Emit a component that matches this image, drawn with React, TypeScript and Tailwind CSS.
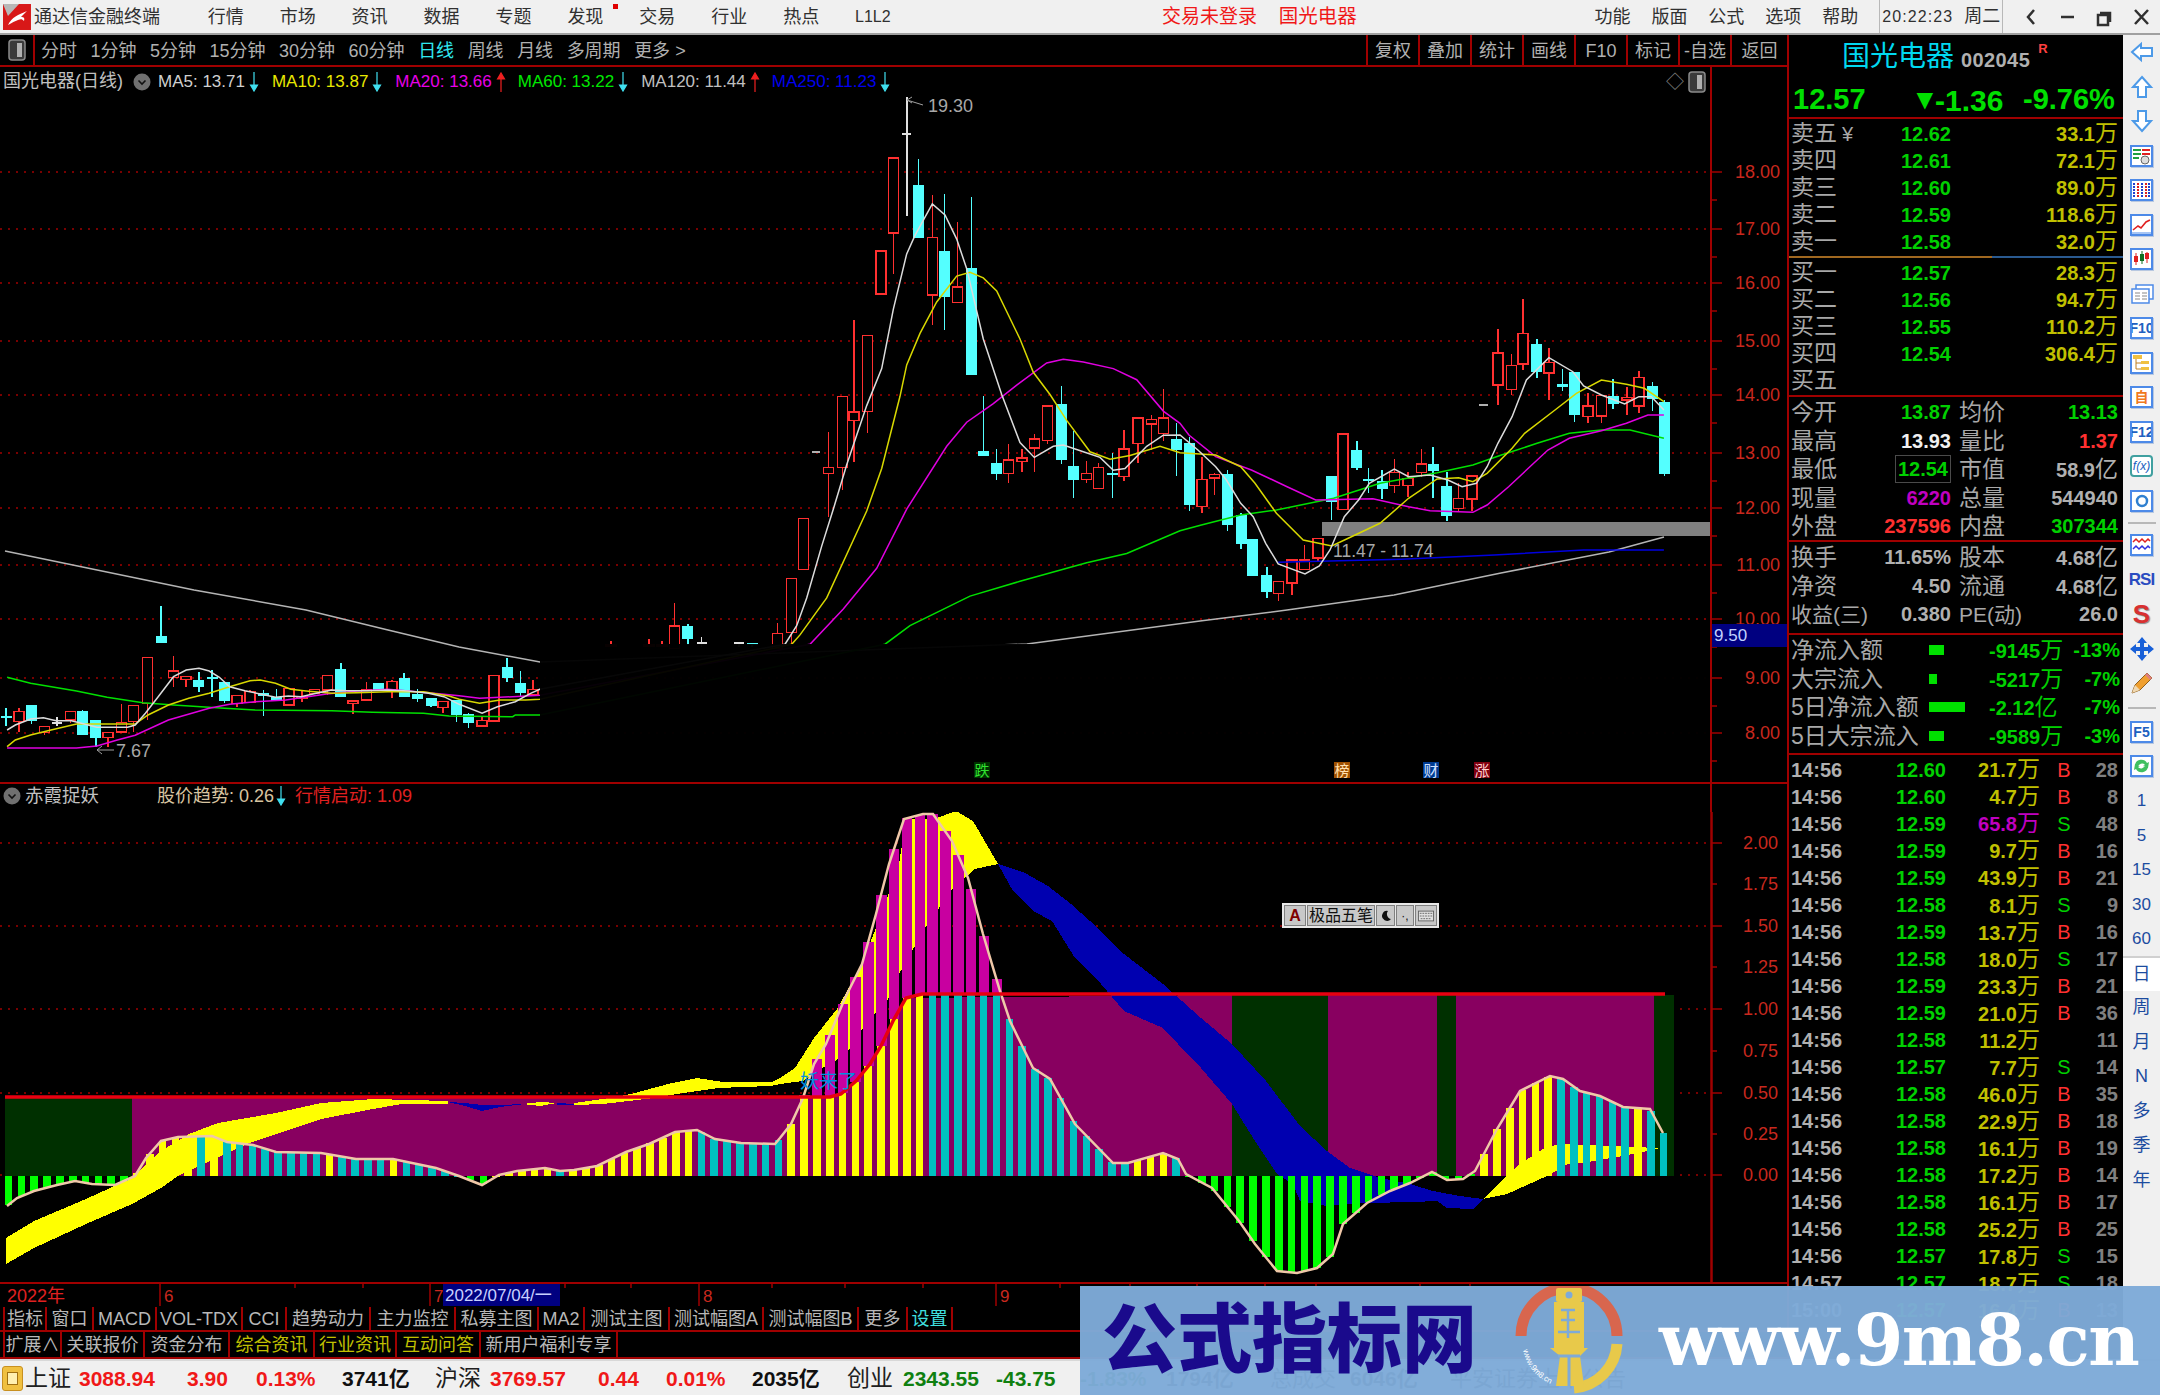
import React from "react";

type Pt = number[];
type Candle = [number, number, number, number, number, "r" | "c" | "w"];

// the numbers below were read off crops of the chart, so each group has its own origin and scale
const toReal = (pts: Pt[], ox: number, oy: number, sx: number, sy: number): Pt[] =>
  pts.map(([x, y]) => [ox + x / sx, oy + y / sy]);
const candleReal = (cs: Candle[], ox: number, oy: number, sx: number, sy: number): Candle[] =>
  cs.map(([x, h, t, b, l, k]) => [ox + x / sx, oy + h / sy, oy + t / sy, oy + b / sy, oy + l / sy, k]);
const left = (p: Pt[]) => toReal(p, 0, 590, 1.96, 3);
const mid = (p: Pt[]) => toReal(p, 700, 80, 3, 2.703);
const right = (p: Pt[]) => toReal(p, 1180, 280, 2.8, 3);
const str = (p: Pt[]) => p.map(([x, y]) => `${x.toFixed(1)},${y.toFixed(1)}`).join(" ");
const ribbon = (u: Pt[], l: Pt[]) => str([...u, ...[...l].reverse()]);

const candles: Candle[] = [
  ...candleReal(
    [
      [12, 355, 378, 381, 408, "c"], [37, 355, 365, 395, 425, "r"], [62, 345, 345, 392, 403, "c"],
      [87, 410, 410, 428, 435, "r"], [112, 380, 398, 400, 408, "w"], [138, 365, 365, 390, 400, "r"],
      [162, 360, 364, 436, 436, "c"], [188, 390, 390, 444, 470, "c"], [212, 428, 428, 443, 470, "r"],
      [238, 342, 397, 426, 426, "r"], [262, 347, 347, 395, 425, "r"], [289, 203, 203, 340, 390, "r"],
      [316, 48, 139, 160, 160, "c"], [340, 197, 243, 263, 290, "r"], [365, 260, 260, 268, 290, "r"],
      [390, 245, 269, 291, 305, "c"], [416, 240, 262, 268, 320, "c"], [440, 275, 275, 332, 340, "c"],
      [465, 317, 317, 341, 350, "r"], [490, 300, 305, 338, 338, "r"], [516, 300, 310, 318, 377, "c"],
      [542, 296, 320, 333, 333, "c"], [566, 296, 296, 345, 345, "r"], [592, 300, 320, 325, 335, "r"],
      [616, 298, 298, 310, 310, "r"], [642, 257, 257, 300, 315, "r"], [668, 220, 238, 321, 321, "c"],
      [692, 333, 333, 340, 372, "r"], [718, 275, 300, 330, 330, "r"], [742, 278, 278, 302, 302, "c"],
      [768, 270, 275, 300, 325, "r"], [792, 250, 265, 322, 322, "c"], [818, 296, 313, 328, 335, "c"],
      [845, 323, 323, 347, 350, "c"], [868, 335, 335, 353, 370, "r"], [895, 330, 330, 375, 395, "c"],
      [918, 370, 373, 400, 413, "c"], [945, 378, 392, 408, 408, "r"], [968, 257, 257, 393, 393, "r"],
      [994, 205, 230, 265, 277, "c"], [1020, 243, 278, 310, 320, "c"], [1045, 270, 298, 315, 315, "r"],
      [1198, 152, 165, 170, 170, "r"], [1272, 148, 165, 170, 170, "r"], [1298, 152, 165, 170, 170, "r"],
      [1322, 40, 108, 175, 175, "r"], [1348, 103, 108, 148, 165, "c"], [1375, 140, 158, 161, 170, "w"],
      [1448, 156, 158, 160, 170, "w"], [1474, 158, 160, 162, 170, "c"], [1524, 98, 130, 175, 175, "r"],
    ],
    0, 590, 1.96, 3,
  ),
  ...candleReal(
    [
      [274, 1347, 1347, 1494, 1530, "r"], [310, 1185, 1185, 1323, 1323, "r"], [386, 952, 1047, 1064, 1182, "r"],
      [427, 856, 856, 1048, 1108, "r"], [462, 648, 897, 921, 1032, "r"], [503, 690, 690, 896, 955, "r"],
      [543, 462, 462, 578, 578, "r"], [580, 211, 211, 414, 525, "r"], [656, 214, 284, 428, 428, "c"],
      [697, 312, 426, 581, 662, "r"], [733, 307, 462, 586, 676, "c"], [773, 385, 560, 602, 602, "r"],
      [814, 315, 507, 797, 797, "c"], [850, 855, 1002, 1015, 1015, "c"], [890, 997, 1034, 1065, 1082, "c"],
      [926, 985, 1027, 1063, 1088, "r"], [966, 998, 1022, 1031, 1060, "r"], [1003, 958, 970, 995, 1060, "r"],
      [1043, 881, 881, 975, 985, "r"], [1084, 827, 876, 1028, 1037, "c"], [1120, 950, 1043, 1080, 1130, "c"],
      [1160, 1030, 1064, 1080, 1088, "r"], [1196, 1036, 1047, 1104, 1104, "r"], [1237, 1009, 1062, 1068, 1130, "c"],
      [1272, 945, 998, 1072, 1085, "r"], [1314, 913, 913, 982, 1036, "r"], [1354, 905, 917, 930, 1000, "r"],
      [1390, 835, 913, 955, 975, "r"], [1430, 928, 970, 1000, 1070, "c"],
    ],
    700, 80, 3, 2.703,
  ),
  ...candleReal(
    [
      [26, 470, 488, 676, 693, "c"], [62, 530, 598, 680, 698, "r"], [96, 580, 583, 594, 645, "r"],
      [133, 570, 583, 735, 752, "c"], [171, 700, 705, 793, 806, "c"], [204, 776, 776, 888, 888, "c"],
      [243, 862, 884, 937, 955, "c"], [276, 904, 904, 941, 963, "r"], [314, 840, 840, 909, 945, "r"],
      [348, 795, 840, 869, 869, "r"], [386, 776, 776, 834, 845, "r"], [424, 587, 587, 665, 720, "c"],
      [457, 462, 462, 689, 689, "r"], [495, 483, 511, 565, 570, "c"], [528, 565, 596, 601, 640, "c"],
      [566, 570, 602, 627, 658, "c"], [600, 538, 578, 617, 640, "r"], [638, 575, 595, 617, 650, "r"],
      [676, 507, 552, 578, 590, "r"], [709, 502, 551, 574, 655, "c"], [747, 575, 619, 708, 722, "c"],
      [780, 610, 656, 685, 697, "r"], [818, 588, 588, 657, 692, "r"], [890, 147, 219, 315, 375, "r"],
      [928, 222, 257, 328, 345, "r"], [961, 56, 161, 252, 270, "r"], [999, 178, 191, 276, 295, "c"],
      [1033, 205, 247, 279, 360, "r"], [1071, 268, 313, 320, 333, "c"], [1104, 277, 277, 405, 425, "c"],
      [1142, 340, 378, 409, 428, "r"], [1180, 346, 346, 408, 428, "r"], [1213, 297, 349, 373, 388, "c"],
      [1251, 322, 352, 360, 405, "r"], [1285, 272, 292, 378, 400, "r"], [1323, 305, 318, 357, 392, "c"],
      [1356, 360, 367, 582, 587, "c"],
    ],
    1180, 280, 2.8, 3,
  ),
];

const ma5 = [
  ...left([[14, 420], [30, 405], [60, 387], [85, 383], [110, 392], [140, 392], [165, 402], [190, 412], [250, 412], [265, 405], [285, 370], [310, 320], [340, 260], [365, 240], [390, 235], [410, 243], [430, 262], [450, 290], [480, 302], [510, 312], [540, 322], [565, 318], [590, 320], [620, 310], [650, 300], [680, 302], [720, 302], [760, 300], [800, 303], [840, 310], [870, 320], [900, 343], [945, 370], [975, 350], [1010, 335], [1040, 310], [1058, 298]]),
  ...mid([[255, 1525], [290, 1475], [320, 1400], [365, 1260], [400, 1160], [440, 1040], [500, 880], [545, 780], [580, 620], [620, 470], [645, 420], [697, 335], [735, 365], [770, 430], [800, 510], [850, 700], [905, 850], [960, 980], [1003, 1020], [1060, 990], [1090, 987], [1150, 1005], [1200, 1020], [1240, 1055], [1275, 1050], [1340, 990], [1390, 960]]),
  ...right([[0, 465], [50, 510], [100, 560], [130, 600], [170, 670], [205, 710], [240, 790], [275, 852], [350, 882], [390, 858], [420, 810], [460, 710], [500, 660], [530, 610], [600, 567], [640, 590], [700, 585], [750, 600], [790, 620], [830, 610], [860, 560], [890, 490], [930, 410], [970, 300], [1033, 233], [1100, 275], [1130, 318], [1180, 345], [1245, 372], [1285, 350], [1320, 350], [1355, 390]]),
];
const ma10 = [
  ...left([[14, 470], [30, 450], [60, 435], [100, 420], [150, 402], [190, 402], [265, 402], [290, 375], [330, 345], [370, 325], [410, 310], [450, 290], [490, 272], [510, 270], [540, 280], [570, 298], [600, 303], [650, 310], [700, 308], [760, 305], [830, 305], [880, 318], [900, 328], [940, 340], [980, 330], [1030, 330], [1058, 328]]),
  ...mid([[275, 1525], [300, 1500], [380, 1400], [500, 1165], [545, 1050], [600, 855], [620, 770], [660, 685], [710, 600], [770, 530], [810, 520], [850, 535], [890, 570], [960, 700], [1000, 790], [1050, 850], [1100, 920], [1170, 1005], [1230, 1025], [1290, 1015], [1380, 990]]),
  ...right([[0, 518], [100, 525], [170, 560], [210, 610], [270, 700], [345, 780], [425, 798], [480, 770], [560, 730], [640, 655], [720, 597], [780, 593], [820, 605], [860, 580], [930, 505], [965, 460], [1050, 390], [1110, 340], [1180, 300], [1250, 313], [1300, 325], [1355, 365]]),
];
const ma20 = [
  ...left([[14, 474], [150, 474], [190, 468], [230, 450], [265, 436], [330, 390], [410, 355], [450, 343], [500, 335], [560, 330], [640, 312], [700, 303], [760, 298], [840, 308], [900, 317], [940, 325], [1058, 316]]),
  ...mid([[330, 1525], [430, 1430], [530, 1320], [620, 1160], [740, 990], [800, 925], [880, 875], [950, 825], [1040, 765], [1090, 755], [1150, 762], [1240, 780], [1310, 810], [1390, 895]]),
  ...right([[0, 430], [25, 465], [100, 530], [200, 570], [300, 620], [380, 660], [540, 656], [640, 680], [700, 692], [820, 697], [860, 675], [920, 620], [1030, 510], [1090, 475], [1180, 452], [1250, 430], [1310, 405], [1355, 405]]),
];
const ma60 = [
  ...left([[14, 262], [60, 280], [150, 303], [210, 322], [280, 338], [340, 345], [440, 355], [500, 360], [650, 362], [730, 367], [830, 370], [880, 378], [1005, 380], [1010, 375], [1058, 375]]),
  ...mid([[555, 1525], [630, 1475], [810, 1395], [960, 1355], [1160, 1305], [1280, 1280]]),
  ...right([[0, 752], [60, 735], [170, 705], [270, 690], [430, 655], [560, 610], [720, 578], [820, 555], [900, 525], [1000, 490], [1090, 460], [1180, 450], [1260, 450], [1355, 475]]),
];
const ma120: Pt[] = [[5, 551], [194, 590], [306, 610], [388, 630], [459, 647], [540, 662], [1027, 644], [1200, 621], [1287, 610], [1394, 595], [1501, 573], [1609, 552], [1664, 537]];
const ma250 = right([[275, 847], [620, 838], [880, 825], [1130, 810], [1355, 810]]);

const gridTop: [number, string][] = [[172, "18.00"], [229, "17.00"], [283, "16.00"], [341, "15.00"], [395, "14.00"], [453, "13.00"], [508, "12.00"], [565, "11.00"], [619, "10.00"], [678, "9.00"], [733, "8.00"]];

const UpperChart = () => (
  <svg width={1787} height={687} viewBox="0 95 1787 687" className="block">
    {gridTop.map(([y, t]) => (
      <g key={t}>
        <line x1={0} x2={1710} y1={y} y2={y} stroke="#a00000" strokeWidth={1.5} strokeDasharray="2 6" />
        <line x1={1711} x2={1722} y1={y} y2={y} stroke="#a00000" strokeWidth={1.5} />
        <line x1={1711} x2={1717} y1={y + 28} y2={y + 28} stroke="#a00000" strokeWidth={1.5} />
        <text x={1780} y={y + 6} textAnchor="end" fontSize={18} fill="#c8281e">{t}</text>
      </g>
    ))}
    <line x1={1711} x2={1711} y1={95} y2={782} stroke="#a00000" strokeWidth={2} />
    <rect x={1322} y={522} width={388} height={14} fill="#808080" />
    <g shapeRendering="crispEdges">
      {candles.map(([x, h, t, b, l, k], i) => {
        const color = k === "r" ? "#ff3030" : k === "c" ? "#54ffff" : "#e0e0e0";
        return (
          <g key={i}>
            <line x1={x} x2={x} y1={h} y2={l} stroke={color} strokeWidth={1.5} />
            {k === "r" && <rect x={x - 5} y={t} width={10} height={b - t} fill="#000" stroke={color} strokeWidth={1.5} />}
            {k === "c" && <rect x={x - 5.5} y={t} width={11} height={Math.max(b - t, 2)} fill={color} />}
            {k === "w" && <line x1={x - 5} x2={x + 5} y1={t} y2={t} stroke={color} strokeWidth={2} />}
          </g>
        );
      })}
      <line x1={906.5} x2={906.5} y1={97} y2={216} stroke="#e0e0e0" strokeWidth={2} />
      <line x1={902} x2={911} y1={134} y2={134} stroke="#e0e0e0" strokeWidth={2} />
      <line x1={812} x2={820} y1={452} y2={452} stroke="#b0b0b0" strokeWidth={2} />
      <line x1={1479} x2={1488} y1={405} y2={405} stroke="#b0b0b0" strokeWidth={2} />
    </g>
    <polyline points={str(ma120)} fill="none" stroke="#b4b4b4" strokeWidth={1.5} />
    <polyline points={str(ma250)} fill="none" stroke="#0000e0" strokeWidth={1.5} />
    <polyline points={str(ma60)} fill="none" stroke="#00e000" strokeWidth={1.5} />
    <polyline points={str(ma20)} fill="none" stroke="#e000e0" strokeWidth={1.5} />
    <polyline points={str(ma10)} fill="none" stroke="#d8d800" strokeWidth={1.5} />
    <polyline points={str(ma5)} fill="none" stroke="#dcdcdc" strokeWidth={1.5} />

    {/* the picture is blacked out here: the candles of that stretch are nearly invisible */}
    <rect x={540} y={644} width={1170} height={136} fill="#000" opacity={0.97} />

    <polyline points="907,100 923,105" fill="none" stroke="#a0a0a0" strokeWidth={1} />
    <polyline points="912,97 907,100 912,103" fill="none" stroke="#a0a0a0" strokeWidth={1} />
    <text x={928} y={112} fontSize={18} fill="#a8a8a8">19.30</text>
    <polyline points="97,750 114,750" fill="none" stroke="#a0a0a0" strokeWidth={1} />
    <polyline points="102,746 97,750 102,754" fill="none" stroke="#a0a0a0" strokeWidth={1} />
    <text x={116} y={757} fontSize={18} fill="#a8a8a8">7.67</text>
    <text x={1333} y={557} fontSize={17.5} fill="#a8a8a8">11.47 - 11.74</text>

    <rect x={1712} y={624} width={75} height={23} fill="#000080" />
    <text x={1714} y={641} fontSize={17} fill="#c0d0ff">9.50</text>

    {[
      [982, "跌", "#003000", "#30e030"],
      [1342, "榜", "#a05000", "#ffe0b0"],
      [1431, "财", "#003a90", "#d0e0ff"],
      [1482, "涨", "#800010", "#ffd0d0"],
    ].map(([x, t, bg, fg]) => (
      <g key={t as string}>
        <rect x={(x as number) - 8} y={762} width={16} height={16} fill={bg as string} />
        <text x={x as number} y={776} textAnchor="middle" fontSize={15} fill={fg as string}>{t as string}</text>
      </g>
    ))}
  </svg>
);

const beige: Pt[] = [
  [7, 1205], [17, 1197], [34, 1190], [57, 1184], [75, 1180], [92, 1183], [115, 1184], [135, 1175], [146, 1157], [161, 1140], [178, 1136], [212, 1135], [227, 1141], [253, 1144], [276, 1151], [321, 1152], [356, 1158], [393, 1158], [436, 1167], [459, 1175], [482, 1184], [499, 1174], [517, 1170], [545, 1167], [560, 1170], [574, 1169], [597, 1165], [626, 1151], [649, 1143], [675, 1131], [697, 1129], [715, 1138], [741, 1142], [775, 1143], [780, 1137], [791, 1123], [803, 1097], [814, 1063], [826, 1043], [845, 997], [862, 963], [876, 913], [889, 863], [904, 818], [923, 813], [933, 813], [952, 840], [968, 877], [983, 933], [1000, 990], [1010, 1020], [1033, 1067], [1050, 1078], [1075, 1123], [1113, 1162], [1128, 1162], [1163, 1152], [1178, 1158], [1186, 1173], [1212, 1187], [1239, 1220], [1255, 1243], [1277, 1270], [1297, 1272], [1317, 1267], [1333, 1253], [1343, 1223], [1367, 1202], [1390, 1190], [1410, 1182], [1432, 1171], [1447, 1179], [1463, 1178], [1475, 1170], [1497, 1128], [1520, 1090], [1550, 1075], [1563, 1078], [1580, 1090], [1600, 1095], [1623, 1106], [1650, 1108], [1663, 1132],
];
const redLine: Pt[] = [[5, 1096], [830, 1096], [841, 1093], [856, 1080], [870, 1063], [881, 1045], [893, 1020], [906, 997], [922, 993], [1665, 993]];

const valueAt = (pts: Pt[], x: number) => {
  if (x <= pts[0][0]) return pts[0][1];
  for (let i = 1; i < pts.length; i++) {
    if (x <= pts[i][0]) {
      const [x0, y0] = pts[i - 1];
      const [x1, y1] = pts[i];
      return y0 + ((y1 - y0) * (x - x0)) / (x1 - x0);
    }
  }
  return pts[pts.length - 1][1];
};

const barRanges: [number, string][] = [
  [130, "#00ff00"], [190, "#ffff00"], [205, "#00c0c0"], [220, "#ffff00"], [320, "#00c0c0"], [335, "#ffff00"], [385, "#00c0c0"], [400, "#ffff00"], [462, "#00c0c0"], [492, "#00ff00"], [550, "#ffff00"], [565, "#00c0c0"], [695, "#ffff00"], [780, "#00c0c0"], [925, "#ffff00"], [1130, "#00c0c0"], [1170, "#ffff00"], [1185, "#00c0c0"], [1475, "#00ff00"], [1555, "#ffff00"], [1633, "#00c0c0"], [1645, "#ffff00"], [1700, "#00c0c0"],
];
const barColor = (x: number) => barRanges.find(([end]) => x < end)![1];
const barXs = Array.from({ length: 130 }, (_, i) => 8.6 + 12.83 * i);
const BASE = 1175;

const yUp1: Pt[] = [[6, 1237], [34, 1220], [86, 1198], [132, 1177], [161, 1150], [189, 1133], [218, 1122], [276, 1112], [321, 1102], [373, 1098], [448, 1100]];
const yLo1: Pt[] = [[6, 1263], [34, 1247], [86, 1223], [132, 1203], [161, 1187], [178, 1175], [247, 1143], [321, 1118], [373, 1108], [402, 1103], [448, 1103]];
const yUp2: Pt[] = [[574, 1102], [603, 1098], [631, 1093], [672, 1082], [697, 1077], [723, 1081], [772, 1081], [780, 1077], [795, 1067], [814, 1037], [837, 1008], [860, 967], [876, 927], [887, 897], [899, 863], [906, 818], [925, 818], [937, 817], [956, 810], [973, 820], [998, 863]];
const yLo2: Pt[] = [[574, 1104], [603, 1103], [654, 1097], [677, 1093], [718, 1087], [770, 1085], [780, 1083], [803, 1080], [822, 1067], [835, 1060], [848, 1050], [861, 1030], [874, 1013], [887, 1000], [899, 973], [912, 950], [925, 927], [939, 907], [950, 890], [967, 875], [975, 868], [998, 863]];
const bUp: Pt[] = [[998, 863], [1025, 872], [1048, 885], [1071, 903], [1090, 920], [1124, 953], [1163, 983], [1201, 1017], [1232, 1043], [1266, 1080], [1300, 1125], [1327, 1150], [1350, 1167], [1380, 1177], [1410, 1183], [1433, 1190], [1460, 1195], [1483, 1198]];
const bLo: Pt[] = [[998, 863], [1013, 890], [1033, 910], [1052, 920], [1075, 957], [1101, 983], [1124, 1010], [1163, 1027], [1178, 1043], [1201, 1067], [1232, 1103], [1255, 1140], [1277, 1173], [1293, 1183], [1300, 1200], [1327, 1205], [1367, 1202], [1413, 1201], [1437, 1200], [1447, 1207], [1473, 1208], [1483, 1198]];
const yUp3: Pt[] = [[1483, 1198], [1507, 1175], [1517, 1165], [1543, 1148], [1558, 1143], [1658, 1147]];
const yLo3: Pt[] = [[1483, 1198], [1507, 1193], [1547, 1175], [1568, 1163], [1583, 1162], [1617, 1156], [1658, 1148]];

const axisLower: [number, string, boolean][] = [
  [842, "2.00", true], [883, "1.75", false], [925, "1.50", true], [966, "1.25", false], [1008, "1.00", true], [1050, "0.75", false], [1092, "0.50", true], [1133, "0.25", false], [1174, "0.00", true],
];

const dateTicks = [160, 295, 363, 430, 565, 631, 699, 772, 845, 923, 996, 1060, 1130, 1197, 1265, 1316, 1420, 1470];

const LowerChart = () => (
  <svg width={1787} height={495} viewBox="0 811 1787 495" className="block">
    {axisLower.map(([y, t, major]) => (
      <g key={t}>
        {major && <line x1={0} x2={1710} y1={y} y2={y} stroke="#a00000" strokeWidth={1.5} strokeDasharray="2 6" />}
        <line x1={1711} x2={major ? 1722 : 1717} y1={y} y2={y} stroke="#a00000" strokeWidth={1.5} />
        <text x={1778} y={y + 6} textAnchor="end" fontSize={18} fill="#c8281e">{t}</text>
      </g>
    ))}
    <line x1={1711.5} x2={1711.5} y1={811} y2={1282} stroke="#a00000" strokeWidth={2.5} />

    <g shapeRendering="crispEdges">
      <polygon points={`132,1096 830,1096 ${str(redLine.slice(2, 8))} 1232,994 1232,${BASE} 132,${BASE}`} fill="#880060" />
      <rect x={5} y={1097} width={127} height={BASE - 1097} fill="#003000" />
      <rect x={1232} y={994} width={96} height={BASE - 994} fill="#003000" />
      <rect x={1328} y={994} width={109} height={BASE - 994} fill="#880060" />
      <rect x={1437} y={994} width={19} height={BASE - 994} fill="#003000" />
      <rect x={1456} y={994} width={198} height={BASE - 994} fill="#880060" />
      <rect x={1654} y={994} width={20} height={BASE - 994} fill="#003000" />

      <polygon points={ribbon(yUp1, yLo1)} fill="#ffff00" />
      <polygon points="448,1101 465,1102 482,1104 500,1104 525,1103 500,1106 482,1110 465,1105" fill="#0000b0" />
      <polygon points="522,1103 540,1101 557,1102 540,1105" fill="#ffff00" />
      <polygon points="557,1102 574,1103 574,1104 557,1104" fill="#0000b0" />
      <polygon points={ribbon(yUp2, yLo2)} fill="#ffff00" />
      <polygon points={ribbon(bUp, bLo)} fill="#0000b0" />
      <polygon points={ribbon(yUp3, yLo3)} fill="#ffff00" />

      {barXs.map((x) => {
        const y = valueAt(beige, x);
        const top = Math.max(y, valueAt(redLine, x));
        return (
          <g key={x}>
            {y < valueAt(redLine, x) - 1 && <rect x={x - 5} y={y} width={10.5} height={valueAt(redLine, x) - y} fill="#c800a0" />}
            <rect x={x - 3.8} y={Math.min(top, BASE)} width={7.6} height={Math.max(Math.abs(BASE - top), 1)} fill={barColor(x)} />
          </g>
        );
      })}
    </g>

    <polyline points={str(beige)} fill="none" stroke="#f0c8a8" strokeWidth={2.5} />
    <polyline points={str(redLine)} fill="none" stroke="#e80010" strokeWidth={3.5} />
    <text x={800} y={1087} fontSize={19} fill="#0090e0">妖来了</text>

    <line x1={0} x2={1787} y1={1282} y2={1282} stroke="#a00000" strokeWidth={2} />
    {dateTicks.map((x) => (
      <line key={x} x1={x} x2={x} y1={1282} y2={[160, 430, 699, 996].includes(x) ? 1305 : 1287} stroke="#a00000" strokeWidth={1.5} />
    ))}
    <text x={7} y={1301} fontSize={18} fill="#e02020">2022年</text>
    <text x={164} y={1301} fontSize={17} fill="#c8281e">6</text>
    <text x={434} y={1301} fontSize={17} fill="#c8281e">7</text>
    <rect x={443} y={1283} width={117} height={22} fill="#000080" />
    <text x={445} y={1300} fontSize={17} fill="#c8d0ff">2022/07/04/一</text>
    <text x={703} y={1301} fontSize={17} fill="#c8281e">8</text>
    <text x={1000} y={1301} fontSize={17} fill="#c8281e">9</text>
  </svg>
);

const Arrow = ({ up, color }: { up?: boolean; color: string }) => (
  <svg width={10} height={20} viewBox="0 0 10 20" className="shrink-0">
    {up ? <path d="M5 20V5M1.5 7L5 1l3.5 6z" stroke={color} fill={color} strokeWidth={1.2} /> : <path d="M5 0v15M1.5 13L5 19l3.5-6z" stroke={color} fill={color} strokeWidth={1.2} />}
  </svg>
);

const DownDot = ({ className }: { className: string }) => (
  <svg width={18} height={18} viewBox="0 0 18 18" className={className}>
    <circle cx={9} cy={9} r={8.5} fill="#707070" />
    <path d="M5.5 7.5L9 11l3.5-3.5" stroke="#111" strokeWidth={1.6} fill="none" />
  </svg>
);

const PaneBox = () => (
  <svg width={18} height={22} viewBox="0 0 18 22">
    <rect x={1} y={1} width={16} height={20} rx={3} fill="#3a3a3a" stroke="#8a8a8a" strokeWidth={1.5} />
    <rect x={9} y={4} width={5} height={14} fill="#b0b0b0" />
  </svg>
);

const menu = ["行情", "市场", "资讯", "数据", "专题", "发现", "交易", "行业", "热点", "L1L2"];
const menuRight = ["功能", "版面", "公式", "选项", "帮助"];

const TitleBar = () => (
  <div className="flex h-[35px] items-center border-b-2 border-[#a0a0a0] bg-[#f0f0f0] text-[18px] text-[#303030]">
    <svg width={28} height={26} viewBox="0 0 28 26" className="ml-[3px]">
      <rect width={28} height={26} fill="#d81818" />
      <path d="M0 0h16L5 12z" fill="#b8b8b8" />
      <path d="M5 21C9 13 15 11 24 7l-6 6c3 0 4 1 3 4-2-2-3-2-6-1-3 1-6 3-10 5z" fill="#fff" />
    </svg>
    <span className="ml-[3px] w-[174px] whitespace-nowrap pt-[1px]">通达信金融终端</span>
    {menu.map((m) => (
      <span key={m} className={`relative w-[72px] whitespace-nowrap pt-[1px] ${m === "L1L2" ? "text-[16px]" : ""}`}>
        {m}
        {m === "发现" && <span className="absolute left-[46px] top-[1px] h-[5px] w-[5px] bg-[#e00000]" />}
      </span>
    ))}
    <span className="ml-[235px] w-[117px] whitespace-nowrap pt-[1px] text-[19px] text-[#f01818]">交易未登录</span>
    <span className="w-[316px] whitespace-nowrap pt-[1px] text-[19.500px] text-[#f01818]">国光电器</span>
    {menuRight.map((m) => (
      <span key={m} className="w-[57px] whitespace-nowrap pt-[1px]">{m}</span>
    ))}
    <div className="flex h-full w-[124px] items-center border-x border-[#b8b8b8] pl-[2px]">
      <span className="w-[82px] text-[16px] tracking-[1.1px]">20:22:23</span>
      <span>周二</span>
    </div>
    <div className="ml-[9px] flex">
      <svg width={37} height={22} viewBox="0 0 37 22"><path d="M22 4l-6 7 6 7" stroke="#303030" strokeWidth={2.5} fill="none" /></svg>
      <svg width={37} height={22} viewBox="0 0 37 22"><path d="M12 11h13" stroke="#303030" strokeWidth={2.5} /></svg>
      <svg width={37} height={22} viewBox="0 0 37 22"><path d="M14 7h10v9M12 9h10v10H12z" stroke="#303030" strokeWidth={2.5} fill="none" /></svg>
      <svg width={37} height={22} viewBox="0 0 37 22"><path d="M12 4l13 14M25 4L12 18" stroke="#303030" strokeWidth={2.5} /></svg>
    </div>
  </div>
);

const periods = ["分时", "1分钟", "5分钟", "15分钟", "30分钟", "60分钟", "日线", "周线", "月线", "多周期", "更多 >"];
const rightTools = ["复权", "叠加", "统计", "画线", "F10", "标记", "-自选", "返回"];

const Toolbar = () => (
  <div className="flex h-[32px] border-b-2 border-[#a00000] text-[18px] text-[#b0b0b0]">
    <div className="flex w-[35px] items-center justify-center border-r-2 border-[#a00000]"><PaneBox /></div>
    <div className="ml-[6px] flex items-center gap-[13.500px] pt-[2px]">
      {periods.map((p) => (
        <span key={p} className={`whitespace-nowrap ${p === "日线" ? "text-[#30e8f0]" : ""}`}>{p}</span>
      ))}
    </div>
    <div className="ml-auto flex w-[421px]">
      {rightTools.map((t) => (
        <span key={t} className="flex w-[52px] items-center justify-center border-l-2 border-[#a00000] pt-[2px] whitespace-nowrap last:flex-1">{t}</span>
      ))}
    </div>
  </div>
);

const MaLegend = () => (
  <div className="flex h-[28px] w-[1712px] items-center border-r-2 border-[#a00000] pl-[3px] pt-[1px] text-[17px] whitespace-nowrap">
    <span className="w-[130px] text-[18px] text-[#c0c0c0]">国光电器(日线)</span>
    <DownDot className="mr-[7px] ml-[0px]" />
    <span className="mr-[4px] text-[#d0d0d0]">MA5: 13.71</span><Arrow color="#40e0f0" />
    <span className="mr-[4px] ml-[13px] text-[#e8e800]">MA10: 13.87</span><Arrow color="#40e0f0" />
    <span className="mr-[4px] ml-[13px] text-[#e800e8]">MA20: 13.66</span><Arrow up color="#f02020" />
    <span className="mr-[4px] ml-[12px] text-[#00e800]">MA60: 13.22</span><Arrow color="#40e0f0" />
    <span className="mr-[4px] ml-[13px] text-[#c0c0c0]">MA120: 11.44</span><Arrow up color="#f02020" />
    <span className="mr-[4px] ml-[12px] text-[#0000f0]">MA250: 11.23</span><Arrow color="#40e0f0" />
    <span className="ml-auto mr-[4px] text-[18px] leading-none text-[#808080]">◇</span>
    <span className="mr-[4px] flex"><PaneBox /></span>
  </div>
);

const IndicatorLegend = () => (
  <div className="flex h-[28px] w-[1712px] items-center border-r-2 border-[#a00000] pb-[4px] pl-[3px] text-[18px] whitespace-nowrap">
    <DownDot className="mr-[4px]" />
    <span className="w-[132px] text-[18.500px] text-[#c0c0c0]">赤霞捉妖</span>
    <span className="mr-[2px] text-[#d8c4a0]">股价趋势: 0.26</span><Arrow color="#40e0f0" />
    <span className="ml-[9px] text-[#e02020]">行情启动: 1.09</span>
  </div>
);

const tabsA: [string, number][] = [["指标", 42], ["窗口", 47], ["MACD", 63], ["VOL-TDX", 86], ["CCI", 44], ["趋势动力", 84], ["主力监控", 85], ["私募主图", 83], ["MA2", 46], ["测试主图", 85], ["测试幅图A", 94], ["测试幅图B", 95], ["更多", 49], ["设置", 47]];
const tabsB: [string, number][] = [["扩展∧", 57], ["关联报价", 83], ["资金分布", 85], ["综合资讯", 85], ["行业资讯", 82], ["互动问答", 84], ["新用户福利专享", 139]];

const TabRow = ({ tabs, h }: { tabs: [string, number][]; h: string }) => (
  <div className={`flex ${h} border-b-2 border-[#a00000] pl-[3px] text-[18px] text-[#b8b8b8]`}>
    {tabs.map(([t, w]) => (
      <span
        key={t}
        style={{ width: w }}
        className={`flex items-center justify-center border-l-2 border-[#a00000] pt-[1px] whitespace-nowrap last:border-r-2 ${t === "设置" ? "text-[#40e0e0]" : ""} ${["综合资讯", "行业资讯", "互动问答"].includes(t) ? "text-[#c0c000]" : ""}`}
      >
        {t}
      </span>
    ))}
  </div>
);

const Cjk = ({ v, u }: { v: string; u: string }) => (
  <>
    {v}
    <span className="text-[23px] font-normal">{u}</span>
  </>
);

const asks = [["卖五", "12.62", "33.1"], ["卖四", "12.61", "72.1"], ["卖三", "12.60", "89.0"], ["卖二", "12.59", "118.6"], ["卖一", "12.58", "32.0"]];
const bids = [["买一", "12.57", "28.3"], ["买二", "12.56", "94.7"], ["买三", "12.55", "110.2"], ["买四", "12.54", "306.4"], ["买五", "", ""]];

const QuoteRow = ({ row }: { row: string[] }) => (
  <div className="flex h-[27px] items-center pl-[2px]">
    <span className="w-[60px] text-[23px] text-[#a8a8a8] whitespace-nowrap">
      {row[0]}
      {row[0] === "卖五" && <span className="ml-[5px] text-[20px]">¥</span>}
    </span>
    <span className="w-[100px] text-right text-[20px] font-bold text-[#00d000]">{row[1]}</span>
    <span className="w-[167px] text-right text-[20px] font-bold text-[#c0c000]">{row[2] && <Cjk v={row[2]} u="万" />}</span>
  </div>
);

const GREEN = "text-[#00d000]";
const GRAY = "text-[#b0b0b0]";
const stats1: [string, string, string, string, string, string][] = [
  ["今开", "13.87", GREEN, "均价", "13.13", GREEN],
  ["最高", "13.93", "text-[#f0f0f0]", "量比", "1.37", "text-[#ff3030]"],
  ["最低", "12.54", GREEN, "市值", "58.9亿", GRAY],
  ["现量", "6220", "text-[#c000c0]", "总量", "544940", GRAY],
  ["外盘", "237596", "text-[#ff3030]", "内盘", "307344", GREEN],
];
const stats2: [string, string, string, string, string, string][] = [
  ["换手", "11.65%", GRAY, "股本", "4.68亿", GRAY],
  ["净资", "4.50", GRAY, "流通", "4.68亿", GRAY],
  ["收益(三)", "0.380", GRAY, "PE(动)", "26.0", GRAY],
];

const StatRow = ({ s }: { s: [string, string, string, string, string, string] }) => {
  const last = s[4].endsWith("亿");
  return (
    <div className="flex h-[28.5px] items-center pl-[2px] text-[20px] font-bold">
      <span className="w-[60px] text-[23px] font-normal text-[#a8a8a8] whitespace-nowrap">{s[0] === "收益(三)" ? <span className="text-[21px]">{s[0]}</span> : s[0]}</span>
      <span className={`w-[100px] text-right ${s[2]}`}>
        {s[0] === "最低" ? <span className="border border-[#4a4a4a] px-[2px] py-[2px]">{s[1]}</span> : s[1]}
      </span>
      <span className="ml-[8px] w-[60px] text-[23px] font-normal text-[#a8a8a8] whitespace-nowrap">{s[3] === "PE(动)" ? <span className="text-[21px]">{s[3]}</span> : s[3]}</span>
      <span className={`w-[99px] text-right ${s[5]}`}>{last ? <Cjk v={s[4].slice(0, -1)} u="亿" /> : s[4]}</span>
    </div>
  );
};

const flows: [string, string, string, string, string][] = [
  ["净流入额", "w-[15px]", "-9145", "万", "-13%"],
  ["大宗流入", "w-[8px]", "-5217", "万", "-7%"],
  ["5日净流入额", "w-[36px]", "-2.12", "亿", "-7%"],
  ["5日大宗流入", "w-[15px]", "-9589", "万", "-3%"],
];

const ticks: [string, string, string, string, string][] = [
  ["14:56", "12.60", "21.7", "B", "28"], ["14:56", "12.60", "4.7", "B", "8"], ["14:56", "12.59", "65.8", "S", "48"],
  ["14:56", "12.59", "9.7", "B", "16"], ["14:56", "12.59", "43.9", "B", "21"], ["14:56", "12.58", "8.1", "S", "9"],
  ["14:56", "12.59", "13.7", "B", "16"], ["14:56", "12.58", "18.0", "S", "17"], ["14:56", "12.59", "23.3", "B", "21"],
  ["14:56", "12.59", "21.0", "B", "36"], ["14:56", "12.58", "11.2", "", "11"], ["14:56", "12.57", "7.7", "S", "14"],
  ["14:56", "12.58", "46.0", "B", "35"], ["14:56", "12.58", "22.9", "B", "18"], ["14:56", "12.58", "16.1", "B", "19"],
  ["14:56", "12.58", "17.2", "B", "14"], ["14:56", "12.58", "16.1", "B", "17"], ["14:56", "12.58", "25.2", "B", "25"],
  ["14:56", "12.57", "17.8", "S", "15"], ["14:57", "12.57", "18.7", "S", "18"], ["15:00", "12.57", "16.4", "B", "13"],
];

const QuotePanel = () => (
  <div className="flex w-[336px] shrink-0 flex-col overflow-hidden border-l-2 border-[#a00000]">
    <div className="h-[84px] shrink-0 border-b-2 border-[#a00000]">
      <div className="flex h-[42px] items-start whitespace-nowrap pt-[6px]">
        <span className="ml-[53px] text-[28px] leading-[32px] text-[#00d8f0]">国光电器</span>
        <span className="ml-[7px] mt-[7px] text-[20px] font-bold leading-[24px] tracking-[0.4px] text-[#b0b0b0]">002045</span>
        <span className="ml-[8px] -mt-[1px] text-[13px] font-bold leading-[18px] text-[#ff4040]">R</span>
      </div>
      <div className="flex h-[40px] items-center whitespace-nowrap pt-[6px] font-bold text-[#00e000]">
        <span className="ml-[4px] w-[118px] text-[29px]">12.57</span>
        <span className="w-[24px] text-[28px] font-normal leading-none">▼</span>
        <span className="w-[88px] text-[30px]">-1.36</span>
        <span className="text-[29px]">-9.76%</span>
      </div>
    </div>
    <div className="h-[137px] shrink-0 pt-[1px]">{asks.map((r) => <QuoteRow key={r[0]} row={r} />)}</div>
    <div className="flex h-[2px] shrink-0"><span className="w-[203px] bg-[#a06820]" /><span className="flex-1 bg-[#2a5a90]" /></div>
    <div className="h-[139px] shrink-0 border-b-2 border-[#a00000] pt-[1px]">{bids.map((r) => <QuoteRow key={r[0]} row={r} />)}</div>
    <div className="h-[145px] shrink-0 border-b-2 border-[#a00000] pt-[1px]">{stats1.map((s) => <StatRow key={s[0]} s={s} />)}</div>
    <div className="h-[93px] shrink-0 border-b-2 border-[#a00000] pt-[1px]">{stats2.map((s) => <StatRow key={s[0]} s={s} />)}</div>
    <div className="h-[120px] shrink-0 border-b-2 border-[#a00000] pt-[1px]">
      {flows.map(([t, w, v, u, p]) => (
        <div key={t} className="flex h-[28.5px] items-center pl-[2px] text-[20px] font-bold text-[#00d000]">
          <span className="w-[138px] text-[23px] font-normal text-[#a8a8a8] whitespace-nowrap">{t}</span>
          <span className="w-[60px]"><span className={`block h-[10px] bg-[#00e000] ${w}`} /></span>
          <span className="w-[68px] text-right whitespace-nowrap"><Cjk v={v} u={u} /></span>
          <span className="w-[63px] text-right">{p}</span>
        </div>
      ))}
    </div>
    <div className="pt-[1px]">
      {ticks.map((t, i) => (
        <div key={i} className="flex h-[27.06px] items-center pl-[2px] text-[20px] font-bold">
          <span className="w-[52px] text-[#b0b0b0]">{t[0]}</span>
          <span className="w-[103px] text-right text-[#00d000]">{t[1]}</span>
          <span className={`w-[94px] text-right whitespace-nowrap ${t[2] === "65.8" ? "text-[#c000c0]" : "text-[#c0c000]"}`}><Cjk v={t[2]} u="万" /></span>
          <span className={`w-[48px] text-center font-normal ${t[3] === "B" ? "text-[#ff3030]" : "text-[#00d000]"}`}>{t[3]}</span>
          <span className="w-[30px] text-right text-[#808080]">{t[4]}</span>
        </div>
      ))}
    </div>
  </div>
);

const Slot = ({ children, className = "" }: { children: React.ReactNode; className?: string }) => (
  <div className={`flex h-[34.5px] shrink-0 items-center justify-center ${className}`}>{children}</div>
);
const Framed = ({ children }: { children: React.ReactNode }) => (
  <div className="flex h-[22px] w-[23px] items-center justify-center overflow-hidden border-2 border-[#4d8ae8] bg-white text-[14px] font-bold leading-none text-[#2060c0] shadow-[1px_1px_0_#b8c8e0]">{children}</div>
);
const SideSep = ({ h }: { h: string }) => (
  <div className={`flex ${h} shrink-0 items-center`}><span className="h-[2px] w-[28px] bg-[#b8b8b8]" /></div>
);
const ArrowIcon = ({ d }: { d: string }) => (
  <svg width={24} height={24} viewBox="0 0 24 24"><path d={d} fill="#fff" stroke="#4d9ae8" strokeWidth={2} /></svg>
);

const SideBar = () => (
  <div className="flex w-[37px] shrink-0 flex-col items-center overflow-hidden bg-[#f0f0f0] text-[17px] text-[#1c4ca0]">
    <Slot><ArrowIcon d="M2 12l9-8v4h11v8H11v4z" /></Slot>
    <Slot><ArrowIcon d="M12 2l9 10h-5v10H8V12H3z" /></Slot>
    <Slot><ArrowIcon d="M12 22l9-10h-5V2H8v10H3z" /></Slot>
    <Slot><Framed><svg width={19} height={18} viewBox="0 0 19 18"><path d="M1 3h8M1 7h8M1 11h6" stroke="#20a040" strokeWidth={2} /><path d="M10 3h8M10 7h8" stroke="#e02020" strokeWidth={2} /><circle cx={13} cy={13} r={4} fill="#ddd" stroke="#666" /></svg></Framed></Slot>
    <Slot><Framed><svg width={19} height={18} viewBox="0 0 19 18"><path d="M2 2v14M6 2v14M10 2v14M14 2v14M17 2v14" stroke="#2040d0" strokeWidth={2} strokeDasharray="2 1" /><path d="M6 2v14M14 2v14" stroke="#e02020" strokeWidth={2} strokeDasharray="2 1" /></svg></Framed></Slot>
    <Slot><Framed><svg width={19} height={18} viewBox="0 0 19 18"><path d="M1 14l5-4 3 2 5-6 4-2" stroke="#e02020" strokeWidth={1.6} fill="none" /><path d="M0 17h19" stroke="#4d8ae8" /></svg></Framed></Slot>
    <Slot><Framed><svg width={19} height={18} viewBox="0 0 19 18"><path d="M4 3v12" stroke="#e02020" /><rect x={2} y={6} width={4} height={6} fill="#e02020" /><path d="M10 1v13" stroke="#107020" /><rect x={8} y={4} width={4} height={7} fill="#107020" /><path d="M15 2v11" stroke="#e02020" /><rect x={13} y={3} width={4} height={6} fill="#e02020" /></svg></Framed></Slot>
    <Slot><svg width={24} height={22} viewBox="0 0 24 22"><path d="M6 2h17v14H6z" fill="#fff" stroke="#4d8ae8" strokeWidth={1.5} /><path d="M2 6h17v14H2z" fill="#fff" stroke="#4d8ae8" strokeWidth={1.5} /><path d="M5 10h5M5 13h5M5 16h5M12 10h5M12 13h5M12 16h5" stroke="#888" /></svg></Slot>
    <Slot><Framed>F10</Framed></Slot>
    <Slot><Framed><svg width={19} height={18} viewBox="0 0 19 18"><path d="M4 4v11h5M4 9h5" stroke="#c08020" fill="none" /><rect x={1} y={1} width={9} height={4} fill="#f0c040" /><rect x={9} y={7} width={8} height={3} fill="#f0c040" /><rect x={9} y={13} width={8} height={3} fill="#f0c040" /></svg></Framed></Slot>
    <Slot><Framed><span className="text-[#f07820]">自</span></Framed></Slot>
    <Slot><Framed>F12</Framed></Slot>
    <Slot><div className="flex h-[22px] w-[23px] items-center justify-center rounded-[4px] border-2 border-[#40a0a0] bg-white text-[12px] italic text-[#2060c0]">f(x)</div></Slot>
    <Slot><Framed><svg width={18} height={18} viewBox="0 0 18 18"><circle cx={9} cy={9} r={5} stroke="#3080d0" strokeWidth={2.5} fill="none" /></svg></Framed></Slot>
    <SideSep h="h-[10px]" />
    <Slot><Framed><svg width={19} height={18} viewBox="0 0 19 18"><path d="M1 6l3-3 3 3 3-3 3 3 3-3 2 2" stroke="#e02020" strokeWidth={1.5} fill="none" /><path d="M1 13l3-3 3 3 3-3 3 3 3-3 2 2" stroke="#3030e0" strokeWidth={1.5} fill="none" /></svg></Framed></Slot>
    <Slot><span className="text-[17px] font-bold tracking-[-1px] text-[#2a4cc0]">RSI</span></Slot>
    <Slot><span className="text-[26px] font-bold leading-none text-[#d83030] [text-shadow:1px_1px_1px_#888]">S</span></Slot>
    <Slot><svg width={26} height={26} viewBox="0 0 26 26"><path d="M13 1l5 6h-3v4h4V8l6 5-6 5v-3h-4v4h3l-5 6-5-6h3v-4H7v3l-6-5 6-5v3h4V7H8z" fill="#1860d8" /></svg></Slot>
    <Slot><svg width={24} height={24} viewBox="0 0 24 24"><path d="M2 22l3-8L17 2l5 5L10 19z" fill="#f0a030" stroke="#906020" /><path d="M17 2l5 5-2 2-5-5z" fill="#e08080" /><path d="M2 22l3-8 5 5z" fill="#f0d8b0" /></svg></Slot>
    <SideSep h="h-[14px]" />
    <Slot><Framed>F5</Framed></Slot>
    <Slot><Framed><svg width={19} height={18} viewBox="0 0 19 18"><path d="M3 8a6.500 6.500 0 0 1 12-2l2-1-1 6-5-2 2-1a4 4 0 0 0-7 2zM16 10a6.500 6.500 0 0 1-12 2l-2 1 1-6 5 2-2 1a4 4 0 0 0 7-2z" fill="#40c060" /></svg></Framed></Slot>
    <Slot>1</Slot>
    <Slot>5</Slot>
    <Slot>15</Slot>
    <Slot>30</Slot>
    <Slot>60</Slot>
    <Slot className="w-full border-t-2 border-[#d0d0d0] bg-white text-[18px]">日</Slot>
    {["周", "月", "N", "多", "季", "年"].map((t) => (
      <Slot key={t} className="text-[18px]">{t}</Slot>
    ))}
  </div>
);

const statusCells: [string, number, string][] = [
  ["上证", 54, "text-[23px] font-normal text-[#202020]"],
  ["3088.94", 108, "text-[#f01818]"],
  ["3.90", 69, "text-[#f01818]"],
  ["0.13%", 86, "text-[#f01818]"],
  ["3741亿", 93, "text-[#101010]"],
  ["沪深", 55, "text-[23px] font-normal text-[#202020]"],
  ["3769.57", 108, "text-[#f01818]"],
  ["0.44", 68, "text-[#f01818]"],
  ["0.01%", 86, "text-[#f01818]"],
  ["2035亿", 95, "text-[#101010]"],
  ["创业", 56, "text-[23px] font-normal text-[#202020]"],
  ["2343.55", 93, "text-[#108010]"],
  ["-43.75", 84, "text-[#108010]"],
  ["-1.83%", 86, "text-[#108010]"],
  ["1794亿", 104, "text-[#101010]"],
  ["总成交", 80, "text-[22px] font-normal text-[#202020]"],
  ["6046亿", 100, "text-[#101010]"],
  ["平安证券上市公告", 200, "text-[22px] font-normal text-[#202020]"],
];

const StatusBar = () => (
  <div className="flex h-[36px] items-center border-t-2 border-[#d8d8d8] bg-[#f0f0f0] pt-[1px] whitespace-nowrap text-[21px] font-bold">
    <div className="ml-[2px] mr-[2px] flex h-[25px] w-[21px] items-center justify-center rounded-[3px] border border-[#c89020] bg-[#f0c040]">
      <span className="h-[13px] w-[11px] border border-[#a07010] bg-[#fff0b0]" />
    </div>
    {statusCells.map(([t, w, c]) => (
      <span key={t} style={{ width: w }} className={`shrink-0 ${c}`}>{t}</span>
    ))}
  </div>
);

const Watermark = () => (
  <div className="absolute bottom-0 left-[1080px] top-[1286px] flex w-[1080px] items-center bg-[#7eaad8]/97">
    <span className="ml-[22px] w-[412px] shrink-0 text-[75px] font-black leading-none text-[#1a0a8c] whitespace-nowrap">公式指标网</span>
    <svg width={110} height={109} viewBox="0 0 110 109" className="shrink-0">
      <defs>
        <path id="logoArc" d="M9 64A46 46 0 0 0 50 101" />
      </defs>
      <path d="M7 50A47 47 0 0 1 103 50" fill="none" stroke="#d8664e" strokeWidth={11} />
      <path d="M103 58A47 47 0 0 1 60 102" fill="none" stroke="#e8c94a" strokeWidth={11} />
      <rect x={42} y={2} width={26} height={14} rx={2} fill="#e8c94a" />
      <circle cx={55} cy={9} r={3.5} fill="#7eaad8" />
      <rect x={40} y={16} width={30} height={46} fill="#e8c94a" />
      <path d="M47 24h14M47 34h14M54 24v28M44 46h22" stroke="#7eaad8" strokeWidth={2.5} />
      <path d="M36 62h38l-8 8 4 30H42l4-30z" fill="#e8c94a" />
      <path d="M44 70h22M55 70v30" stroke="#7eaad8" strokeWidth={3} />
      <text fontSize={8} fill="#ffffff"><textPath href="#logoArc">www.9m8.cn</textPath></text>
    </svg>
    <span className="ml-[35px] shrink-0 text-[71px] font-bold leading-none tracking-[-1.500px] text-white whitespace-nowrap font-['DejaVu_Serif',serif]">www.9m8.cn</span>
  </div>
);

const ImeBar = () => (
  <div className="absolute left-[1282px] top-[903px] flex h-[25px] w-[157px] items-center gap-[1px] bg-[#e8e8e8] p-[2px] text-[16px] leading-none text-[#101010]">
    <span className="flex h-full w-[22px] shrink-0 items-center justify-center border border-[#808080] bg-[#c8c8c8] font-bold text-[#800000]">A</span>
    <span className="flex h-full w-[68px] shrink-0 items-center justify-center whitespace-nowrap border border-[#808080] bg-[#c8c8c8]">极品五笔</span>
    <span className="flex h-full w-[19px] shrink-0 items-center justify-center border border-[#808080] bg-[#c8c8c8]">
      <svg width={12} height={12} viewBox="0 0 12 12"><path d="M8 1a5 5 0 1 0 3 8A5 5 0 0 1 8 1z" fill="#101010" /></svg>
    </span>
    <span className="flex h-full w-[18px] shrink-0 items-center justify-center border border-[#808080] bg-[#c8c8c8] text-[12px]">·,</span>
    <span className="flex h-full flex-1 items-center justify-center border border-[#808080] bg-[#c8c8c8]">
      <svg width={16} height={12} viewBox="0 0 18 12"><rect x={0.5} y={0.5} width={17} height={11} fill="#e0e0e0" stroke="#606060" /><path d="M2 3h14M2 6h14M3 9h12" stroke="#606060" strokeDasharray="2 1" /></svg>
    </span>
  </div>
);

const App = () => (
  <div className="relative h-[1395px] w-[2160px] overflow-hidden bg-black font-['Liberation_Sans','Noto_Sans_CJK_SC',sans-serif]">
    <TitleBar />
    <div className="flex h-[1324px] overflow-hidden">
      <div className="flex w-[1787px] shrink-0 flex-col">
        <Toolbar />
        <MaLegend />
        <UpperChart />
        <div className="h-[2px] shrink-0 bg-[#a00000]" />
        <IndicatorLegend />
        <LowerChart />
        <TabRow tabs={tabsA} h="h-[25px]" />
        <TabRow tabs={tabsB} h="h-[27px]" />
      </div>
      <QuotePanel />
      <SideBar />
    </div>
    <StatusBar />
    <ImeBar />
    <Watermark />
  </div>
);

export default App;
